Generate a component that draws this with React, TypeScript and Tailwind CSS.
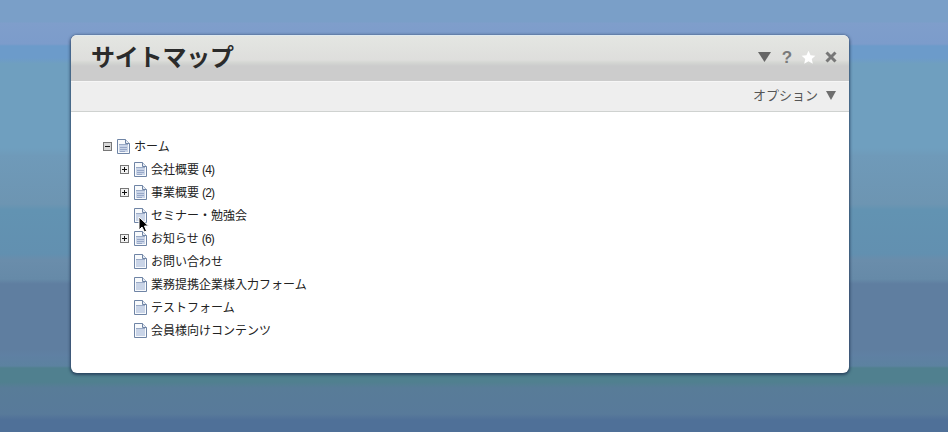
const jp = "font-['Liberation_Sans','Noto_Sans_CJK_JP',sans-serif]"

type Row = { label: string; count?: string; level: 0 | 1; toggle?: 'plus' | 'minus' }

const rows: Row[] = [
  { label: 'ホーム', level: 0, toggle: 'minus' },
  { label: '会社概要', count: '(4)', level: 1, toggle: 'plus' },
  { label: '事業概要', count: '(2)', level: 1, toggle: 'plus' },
  { label: 'セミナー・勉強会', level: 1 },
  { label: 'お知らせ', count: '(6)', level: 1, toggle: 'plus' },
  { label: 'お問い合わせ', level: 1 },
  { label: '業務提携企業様入力フォーム', level: 1 },
  { label: 'テストフォーム', level: 1 },
  { label: '会員様向けコンテンツ', level: 1 },
]

function Toggle({ type }: { type: 'plus' | 'minus' }) {
  return (
    <svg width="9" height="9" viewBox="0 0 9 9" className="shrink-0">
      <rect x="0.5" y="0.5" width="8" height="8" fill={type === 'minus' ? '#d8d8d8' : '#f2f2f2'} stroke="#777" />
      <path d="M2 4.5h5" stroke="#111" />
      {type === 'plus' && <path d="M4.5 2v5" stroke="#111" />}
    </svg>
  )
}

function PageIcon({ lines }: { lines: boolean }) {
  return (
    <svg width="13" height="15" viewBox="0 0 13 15" className="shrink-0">
      <path d="M0.5 0.5H8.5L12.5 4.5V14.5H0.5Z" fill="#f8fafc" stroke="#6f84a5" />
      <path d="M8.5 0.500V4.500H12.500" fill="#e6ebf3" stroke="#6f84a5" />
      <path d="M2 6h9v7H2Z" fill="#c9d4e7" />
      <path d="M2 5.500h9" stroke="#9aaac6" />
      {lines && <path d="M3 8.500h7M3 10.500h7M3 12.500h5" stroke="#98a8c8" />}
    </svg>
  )
}

function TreeRow({ row }: { row: Row }) {
  return (
    <li className={`flex h-[23px] items-center ${row.level === 0 ? 'pl-[32px]' : 'pl-[49px]'}`}>
      <span className="flex w-[13px] shrink-0 items-center">{row.toggle && <Toggle type={row.toggle} />}</span>
      <span className="ml-[1px]">
        <PageIcon lines={!!row.toggle} />
      </span>
      <span className={`ml-[4px] text-[12px] text-[#222] ${jp}`}>
        {row.label}
        {row.count && <span className="ml-[3px] tracking-[-0.8px]">{row.count}</span>}
      </span>
    </li>
  )
}

export default function App() {
  return (
    <div className="h-[432px] w-[948px] overflow-hidden bg-[linear-gradient(180deg,#7a9fc8_0px,#7a9fc8_22px,#7f9ecb_23px,#7c9ccb_44px,#6c9bca_46px,#6c9bca_58px,#6f9fbf_64px,#6f9fbf_148px,#6f9ab9_156px,#6d95b2_204px,#6293b2_210px,#6290b0_254px,#6a8dab_260px,#668aa8_279px,#5f7ea0_284px,#5f7ea0_349px,#5f80a3_355px,#5c82a0_366px,#50808f_368px,#50808f_382px,#587c98_388px,#587a9a_414px,#4f7098_420px,#4f7098_432px)] pl-[71px] pt-[35px]">
      <div className="relative h-[338px] w-[778px] overflow-hidden rounded-[6px] bg-white shadow-[0_1px_3px_1px_rgba(30,50,80,0.75)]">
        <header className="flex h-[46px] items-center justify-between border-t border-[#dfeaf0] bg-[linear-gradient(180deg,#e4e6e2_0px,#dededc_24px,#d6d8d4_26px,#cccccc_30px,#cccccc_46px)] pl-[20px] pr-[12px]">
          <h1 className={`pb-[1px] text-[24px] leading-none font-bold tracking-[-0.2px] text-[#2b2b2b] ${jp}`}>サイトマップ</h1>
          <div className="flex items-center gap-[8px] pb-[3px]">
            <svg width="13" height="10" viewBox="0 0 13 10" className="mr-[2px]"><path d="M0 0h13L6.500 10Z" fill="#666" /></svg>
            <span className="w-[12px] text-center text-[17px] leading-none font-bold text-[#7a7a7a] font-['Liberation_Sans',sans-serif]">?</span>
            <svg width="15" height="15" viewBox="0 0 24 24"><path d="M12 1l3.300 7.300 7.700.8-5.800 5.200 1.700 7.700L12 18l-6.900 4 1.700-7.700L1 9.100l7.700-.8Z" fill="#fff" /></svg>
            <svg width="12" height="12" viewBox="0 0 12 12" className="ml-[1px]"><path d="M1.500 1.500l9 9M10.500 1.500l-9 9" stroke="#777" strokeWidth="3" /></svg>
          </div>
        </header>
        <div className="flex h-[31px] items-center justify-end border-t border-b border-t-[#f6f6f6] border-b-[#cfd2d0] bg-[#eeeeee] pr-[13px] pb-[2px]">
          <span className={`text-[13px] text-[#555] ${jp}`}>オプション</span>
          <svg width="10" height="9" viewBox="0 0 10 9" className="ml-[8px]"><path d="M0 0h10L5 9Z" fill="#6e6e6e" /></svg>
        </div>
        <ul className="pt-[23px]">
          {rows.map((row) => (
            <TreeRow key={row.label} row={row} />
          ))}
        </ul>
        {/* mouse pointer */}
        <svg width="12" height="17" viewBox="0 0 12 17" className="absolute left-[67px] top-[181px]">
          <path d="M1 1V14L4 11L6.500 16L8.500 15L6.500 10H10.500Z" fill="#000" stroke="#fff" />
        </svg>
      </div>
    </div>
  )
}
